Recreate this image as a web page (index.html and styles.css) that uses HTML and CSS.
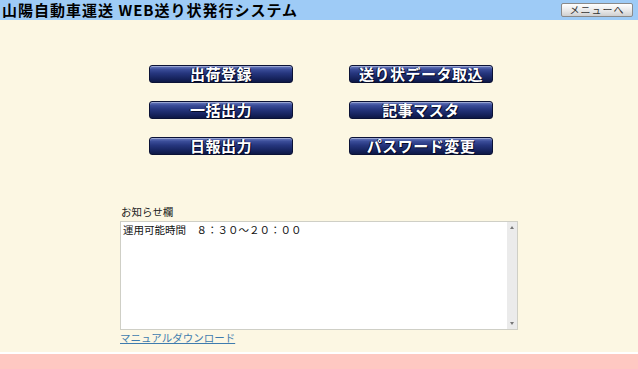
FILE: index.html
```html
<!DOCTYPE html>
<html lang="ja">
<head>
<meta charset="utf-8">
<title>山陽自動車運送 WEB送り状発行システム</title>
<link rel="stylesheet" href="styles.css">
</head>
<body>
<header class="header">
  <h1 class="title">山陽自動車運送 WEB送り状発行システム</h1>
  <button class="menu-btn">メニューへ</button>
</header>
<main class="content">
  <nav class="btn-grid">
    <a class="nav-btn">出荷登録</a>
    <a class="nav-btn">送り状データ取込</a>
    <a class="nav-btn">一括出力</a>
    <a class="nav-btn">記事マスタ</a>
    <a class="nav-btn">日報出力</a>
    <a class="nav-btn">パスワード変更</a>
  </nav>
  <section class="notice">
    <div class="notice-label">お知らせ欄</div>
    <div class="notice-box">
      <div class="notice-text">運用可能時間　８：３０～２０：００</div>
      <div class="scrollbar"><span class="arrow arrow-up"></span><span class="arrow arrow-down"></span></div>
    </div>
    <a class="manual-link">マニュアルダウンロード</a>
  </section>
</main>
<footer class="footer"></footer>
</body>
</html>
```
FILE: styles.css
```css
html, body {
  margin: 0;
  padding: 0;
}
body {
  width: 638px;
  height: 369px;
  overflow: hidden;
  display: flex;
  flex-direction: column;
  background: #fcf7e3;
  font-family: "Noto Sans CJK JP", "Noto Sans", sans-serif;
}
.header {
  height: 20px;
  background: #9ecbf6;
  display: flex;
  align-items: center;
  justify-content: space-between;
  padding: 0 5px 0 2px;
}
.title {
  margin: 0;
  font-size: 15px;
  font-weight: bold;
  line-height: 20px;
  color: #000;
  letter-spacing: 1px;
}
.menu-btn {
  width: 72px;
  height: 14px;
  margin-top: -1px;
  padding: 0;
  border: 1px solid #8a8a8a;
  border-radius: 2px;
  background: linear-gradient(#ffffff, #e6e6e6 60%, #cfcfcf);
  font-family: inherit;
  font-size: 10px;
  line-height: 12px;
  color: #333;
  letter-spacing: 1px;
}
.content {
  height: 332px;
  padding-top: 45px;
  box-sizing: border-box;
}
.btn-grid {
  display: grid;
  grid-template-columns: 144px 144px;
  grid-auto-rows: 18px;
  column-gap: 56px;
  row-gap: 18px;
  margin-left: 149px;
}
.nav-btn {
  display: flex;
  align-items: center;
  justify-content: center;
  border: 1px solid #0b1236;
  border-radius: 3px;
  box-sizing: border-box;
  background: linear-gradient(#6a7cc0 0%, #3a4c98 22%, #26367e 45%, #1a2866 70%, #0e1846 100%);
  box-shadow: inset 0 1px 0 rgba(255,255,255,0.35);
  color: #fff;
  font-size: 15px;
  font-weight: bold;
  line-height: 16px;
  letter-spacing: 0.5px;
  text-shadow: 1px 1px 0 #050a25, -1px 0 0 #0a1440;
  cursor: pointer;
}
.notice {
  width: 398px;
  margin: 50px 0 0 120px;
}
.notice-label {
  font-size: 10.5px;
  line-height: 14px;
  height: 16px;
  color: #222;
  padding-left: 1px;
}
.notice-box {
  display: flex;
  height: 109px;
  box-sizing: border-box;
  border: 1px solid #cfcfc6;
  background: #fff;
}
.notice-text {
  flex: 1;
  padding: 1px 2px;
  font-size: 10.5px;
  line-height: 13px;
  color: #111;
}
.scrollbar {
  width: 10px;
  background: #ebebeb;
  display: flex;
  flex-direction: column;
  justify-content: space-between;
  align-items: center;
  padding: 4px 0 4px;
}
.arrow {
  width: 0;
  height: 0;
  border-left: 2px solid transparent;
  border-right: 2px solid transparent;
}
.arrow-up {
  border-bottom: 3px solid #777;
}
.arrow-down {
  border-top: 3px solid #777;
}
.manual-link {
  display: block;
  width: max-content;
  margin-top: 1px;
  font-size: 10.5px;
  line-height: 14px;
  color: #3f7cae;
  text-decoration: underline;
  cursor: pointer;
}
.footer {
  flex: 1;
  border-top: 2px solid #fff;
  background: #fec8c2;
}
```
